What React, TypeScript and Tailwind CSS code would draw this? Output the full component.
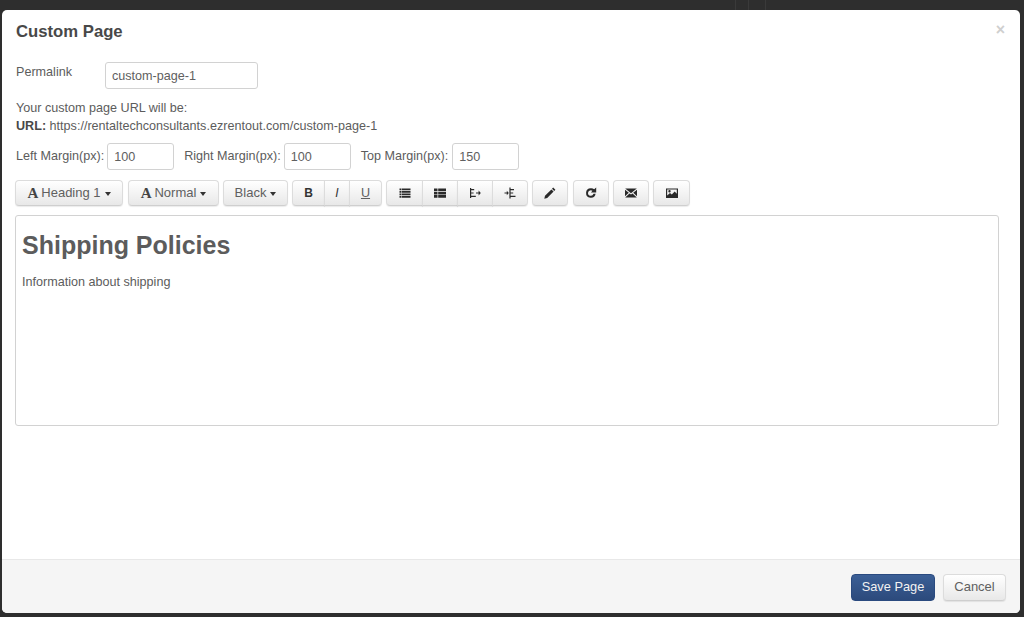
import { ReactNode } from "react";

const btn =
  "h-[26px] flex items-center justify-center border border-[#dcdcdc] border-b-[#cfcfcf] bg-gradient-to-b from-white to-[#e8e8e8] text-[13px] text-[#606060] shadow-[0_1px_1px_rgba(0,0,0,0.08)]";

const FontA = () => (
  <span className="font-['Liberation_Serif',serif] font-bold text-[15px] leading-none text-[#444] mr-[3px]">A</span>
);

const Caret = () => (
  <span className="ml-[4px] mt-[1px] w-0 h-0 border-l-[3.5px] border-r-[3.5px] border-t-[4px] border-l-transparent border-r-transparent border-t-[#333]" />
);

const Icon = ({ children }: { children: ReactNode }) => (
  <svg width="14" height="14" viewBox="0 0 14 14" fill="#2a2a2a">
    {children}
  </svg>
);

const Group = ({ items, widths }: { items: ReactNode[]; widths: string[] }) => (
  <div className="flex">
    {items.map((item, i) => (
      <div
        key={i}
        className={`${btn} ${widths[i]} ${i === 0 ? "rounded-l-[4px]" : "-ml-px"} ${
          i === items.length - 1 ? "rounded-r-[4px]" : ""
        }`}
      >
        {item}
      </div>
    ))}
  </div>
);

const listIcon = (
  <Icon>
    <path d="M1.5 2.5h2v1.8h-2zM1.5 5h2v1.8h-2zM1.5 7.5h2v1.8h-2zM1.5 10h2v1.8h-2zM4 2.5h8.5v1.8H4zM4 5h8.5v1.8H4zM4 7.5h8.5v1.8H4zM4 10h8.5v1.8H4z" />
  </Icon>
);
const olIcon = (
  <Icon>
    <path d="M1 2.5h3.5v2.6H1zM1 5.8h3.5v2.6H1zM1 9.1h3.5v2.6H1zM5.2 2.5H13v2.6H5.2zM5.2 5.8H13v2.6H5.2zM5.2 9.1H13v2.6H5.2z" />
  </Icon>
);
const outdentIcon = (
  <Icon>
    <path d="M2 2h1.2v10H2zM3.2 3h3v1.2h-3zM3.2 6.4h2.4v1.2H3.2zM3.2 9.8h4.6V11H3.2zM8 6.4h3v1.2H8zM10.6 4.6l2.2 2.4-2.2 2.4z" />
  </Icon>
);
const indentIcon = (
  <Icon>
    <path d="M6.4 1.5h1.2v11H6.4zM7.6 3h3.4v1.2H7.6zM7.6 6.4h2.6v1.2H7.6zM7.6 9.8H12.5V11H7.6zM1.5 6.4h2.6v1.2H1.5zM3.8 4.8l2 2.2-2 2.2z" />
  </Icon>
);
const pencilIcon = (
  <Icon>
    <path d="M10.2 1.6l2.2 2.2-1.2 1.2L9 2.8zM8.4 3.4l2.2 2.2-6.4 6.4-2.9.7.7-2.9z" />
  </Icon>
);
const redoIcon = (
  <Icon>
    <path d="M6.8 2.2a4.8 4.8 0 1 0 4.8 5.6H9.5A2.8 2.8 0 1 1 6.8 4.2c.6 0 1.2.2 1.6.6L7 6.4h5.2V1.4l-2 1.9a4.8 4.8 0 0 0-3.4-1.1z" />
  </Icon>
);
const mailIcon = (
  <Icon>
    <path d="M1.2 2.5h11.6L7 7.2zM1 3.7l3.8 3.1L1 10.2zM13 3.7L9.2 6.8l3.8 3.4zM5.5 7.4L7 8.6l1.5-1.2 4.3 4.1H1.2z" />
  </Icon>
);
const imageIcon = (
  <Icon>
    <path
      fillRule="evenodd"
      d="M1 2.5h12v9.5H1zM2.2 3.6v6l2.8-2.7 1.8 1.7 2.9-3 2.1 2.2V3.6zM4.5 4a1.2 1.2 0 1 1 0 2.4 1.2 1.2 0 0 1 0-2.4z"
    />
  </Icon>
);

const MarginField = ({ label, value, className }: { label: string; value: string; className: string }) => (
  <div className={`flex items-center ${className}`}>
    <label>{label}</label>
    <input
      readOnly
      value={value}
      className="ml-[3px] w-[67px] h-[27px] px-[6px] pt-[1px] border border-[#d2d2d2] rounded-[3px] text-[12.6px] text-[#606060] bg-white outline-none"
    />
  </div>
);

export default function App() {
  return (
    <div className="w-[1024px] h-[617px] overflow-hidden bg-[#2e2e2e] pl-[2px] font-['Liberation_Sans',Arial,sans-serif] text-[12.6px] text-[#5c5c5c]">
      {/* page behind the backdrop, only a strip of it shows */}
      <div className="h-[10px] flex">
        <div className="w-[733px]" />
        <div className="w-[13px] border-l border-[#3a3a3a]" />
        <div className="w-[18px] border-x border-[#3a3a3a]" />
      </div>

      <div className="w-[1018px] h-[603px] bg-white rounded-[5px] flex flex-col">
        <div className="flex justify-between pl-[14px] pr-[15px] pt-[11px] h-[52px]">
          <h3 className="text-[16.7px] leading-[21px] font-bold text-[#484848]">Custom Page</h3>
          <span className="text-[#cfcfcf] font-bold text-[16px] leading-[16px] mt-[1px]">×</span>
        </div>

        <div className="flex-1 pl-[13px]">
          <div className="flex items-start h-[27px] pl-px">
            <label className="w-[89px] pt-[3px] leading-[15px]">Permalink</label>
            <input
              readOnly
              value="custom-page-1"
              className="w-[153px] h-[27px] px-[6px] border border-[#d2d2d2] rounded-[3px] text-[12.6px] text-[#606060] bg-white outline-none"
            />
          </div>

          <p className="mt-[10px] leading-[18px] pl-px">Your custom page URL will be:</p>
          <p className="leading-[18px] pl-px">
            <b className="text-[#484848]">URL:</b> https://rentaltechconsultants.ezrentout.com/custom-page-1
          </p>

          <div className="mt-[8px] flex pl-px">
            <MarginField label="Left Margin(px):" value="100" className="mr-[10px]" />
            <MarginField label="Right Margin(px):" value="100" className="mr-[10px]" />
            <MarginField label="Top Margin(px):" value="150" className="[&>input]:ml-[4px]" />
          </div>

          <div className="mt-[10px] flex">
            <div className={`${btn} w-[108px] rounded-[4px] mr-[5px]`}>
              <FontA />
              Heading 1
              <Caret />
            </div>
            <div className={`${btn} w-[91px] rounded-[4px] mr-[4px]`}>
              <FontA />
              Normal
              <Caret />
            </div>
            <div className={`${btn} w-[65px] rounded-[4px] mr-[4px]`}>
              Black
              <Caret />
            </div>
            <div className="mr-[4px]">
              <Group
                widths={["w-[33px]", "w-[26px]", "w-[33px]"]}
                items={[
                  <b className="text-[12px] text-[#333]">B</b>,
                  <i className="text-[12px] text-[#333]">I</i>,
                  <u className="text-[12.6px]">U</u>,
                ]}
              />
            </div>
            <div className="mr-[4px]">
              <Group
                widths={["w-[37px]", "w-[36px]", "w-[36px]", "w-[36px]"]}
                items={[listIcon, olIcon, outdentIcon, indentIcon]}
              />
            </div>
            <div className={`${btn} w-[36px] rounded-[4px] mr-[5px]`}>{pencilIcon}</div>
            <div className={`${btn} w-[36px] rounded-[4px] mr-[4px]`}>{redoIcon}</div>
            <div className={`${btn} w-[36px] rounded-[4px] mr-[4px]`}>{mailIcon}</div>
            <div className={`${btn} w-[37px] rounded-[4px]`}>{imageIcon}</div>
          </div>

          <div className="mt-[9px] w-[984px] h-[211px] border border-[#d2d2d2] rounded-[3px] px-[6px] pt-[13px]">
            <h1 className="text-[25px] leading-[32px] font-bold text-[#5c5c5c]">Shipping Policies</h1>
            <p className="mt-[12px] leading-[18px]">Information about shipping</p>
          </div>
        </div>

        <div className="h-[54px] bg-[#f5f5f5] border-t border-[#e8e8e8] rounded-b-[5px] flex items-center justify-end gap-[8px] pr-[14px] pt-[1px]">
          <div className="w-[84px] h-[27px] flex items-center justify-center rounded-[4px] border border-[#2a4a7f] bg-gradient-to-b from-[#3b5f96] to-[#2c4a7c] text-[12.8px] text-[#f2f2f2]">
            Save Page
          </div>
          <div className={`${btn} !h-[27px] w-[63px] rounded-[4px]`}>Cancel</div>
        </div>
      </div>
    </div>
  );
}
